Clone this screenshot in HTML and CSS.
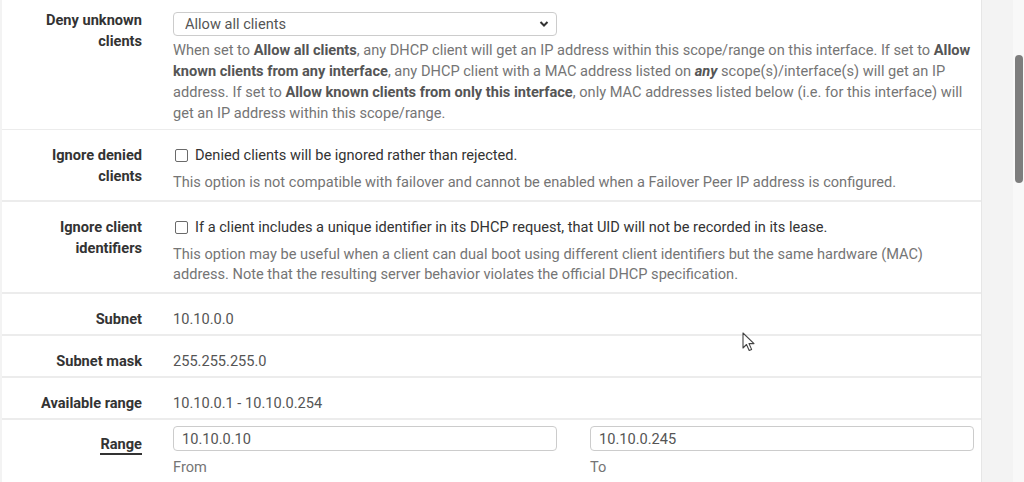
FILE: index.html
```html
<!DOCTYPE html>
<html>
<head>
<meta charset="utf-8">
<link rel="stylesheet" href="styles.css">
</head>
<body>
<div class="page">
  <div class="panel">
    <div class="row row-first">
      <div class="label">Deny unknown clients</div>
      <div class="value">
        <div class="select-wrap">
          <select class="select"><option>Allow all clients</option></select>
          <svg class="chev" width="10" height="8" viewBox="0 0 10 8"><path d="M1.5 2 L5 5.5 L8.5 2" fill="none" stroke="#333" stroke-width="2"/></svg>
        </div>
        <div class="help help-first">When set to <b>Allow all clients</b>, any DHCP client will get an IP address within this scope/range on this interface. If set to <b>Allow</b><br><b>known clients from any interface</b>, any DHCP client with a MAC address listed on <b><i>any</i></b> scope(s)/interface(s) will get an IP<br>address. If set to <b>Allow known clients from only this interface</b>, only MAC addresses listed below (i.e. for this interface) will<br>get an IP address within this scope/range.</div>
      </div>
    </div>
    <div class="row row-check">
      <div class="label">Ignore denied clients</div>
      <div class="value">
        <label class="check"><span class="box"></span>Denied clients will be ignored rather than rejected.</label>
        <div class="help">This option is not compatible with failover and cannot be enabled when a Failover Peer IP address is configured.</div>
      </div>
    </div>
    <div class="row row-check row-check2">
      <div class="label">Ignore client identifiers</div>
      <div class="value">
        <label class="check"><span class="box"></span>If a client includes a unique identifier in its DHCP request, that UID will not be recorded in its lease.</label>
        <div class="help">This option may be useful when a client can dual boot using different client identifiers but the same hardware (MAC) address. Note that the resulting server behavior violates the official DHCP specification.</div>
      </div>
    </div>
    <div class="row row-static">
      <div class="label">Subnet</div>
      <div class="value static">10.10.0.0</div>
    </div>
    <div class="row row-static">
      <div class="label">Subnet mask</div>
      <div class="value static">255.255.255.0</div>
    </div>
    <div class="row row-static">
      <div class="label">Available range</div>
      <div class="value static">10.10.0.1 - 10.10.0.254</div>
    </div>
    <div class="row row-range">
      <div class="label"><span class="req">Range</span></div>
      <div class="value range">
        <div class="field">
          <input class="input" type="text" value="10.10.0.10">
          <div class="sub">From</div>
        </div>
        <div class="field">
          <input class="input" type="text" value="10.10.0.245">
          <div class="sub">To</div>
        </div>
      </div>
    </div>
  </div>
  <div class="gutter"></div>
  <div class="scrollbar"><div class="thumb"></div></div>
</div>
<svg class="cursor" width="14" height="22" viewBox="0 0 14 22"><path d="M1 1 L1 16 L4.5 12.5 L7.2 18.5 L9.6 17.4 L7 11.6 L12 11.6 Z" fill="#fff" stroke="#444" stroke-width="1.1" stroke-linejoin="round"/></svg>
</body>
</html>
```
FILE: styles.css
```css
html, body {
  margin: 0;
  padding: 0;
}
body {
  width: 1024px;
  height: 482px;
  overflow: hidden;
  background: #f3f3f3;
  font-family: Roboto, "Liberation Sans", sans-serif;
  font-size: 14.6px;
  line-height: 21px;
  color: #333;
  position: relative;
}
.page {
  display: flex;
  height: 482px;
}
.panel {
  margin-left: 2px;
  width: 979px;
  background: #fff;
  border-right: 1px solid #e6e6e6;
  flex: none;
}
.gutter {
  flex: 1;
  background: #f3f3f3;
}
.scrollbar {
  width: 11px;
  background: #f8f8f8;
  position: relative;
}
.thumb {
  position: absolute;
  left: 2px;
  top: 55px;
  width: 8px;
  height: 128px;
  border-radius: 4px;
  background: #7d7d7d;
}
.row {
  display: grid;
  grid-template-columns: 171px 1fr;
  border-bottom: 2px solid #ececec;
}
.label {
  font-weight: 700;
  text-align: right;
  padding-right: 31px;
  padding-left: 16px;
  color: #333;
}
.value {
  padding-right: 6px;
}
.row-first {
  padding: 10px 0 5px;
  border-bottom-width: 1px;
}
.select-wrap {
  position: relative;
  width: 384px;
  margin-top: 2px;
}
.select {
  appearance: none;
  -webkit-appearance: none;
  width: 384px;
  height: 24px;
  border: 1px solid #ccc;
  border-radius: 4px;
  background: #fff;
  font-family: Roboto, "Liberation Sans", sans-serif;
  font-size: 14.6px;
  color: #555;
  padding: 0 0 0 11px;
  margin: 0;
  display: block;
}
.chev {
  position: absolute;
  right: 8px;
  top: 8px;
}
.help {
  color: #757575;
  margin-top: 4px;
}
.help-first {
  white-space: nowrap;
}
.help b {
  color: #555;
}
.row-check {
  padding: 15px 0 7px;
}
.check {
  display: flex;
  align-items: center;
  color: #333;
}
.box {
  width: 11px;
  height: 11px;
  border: 1px solid #6a6a6a;
  border-radius: 2px;
  margin: 0 7px 0 2px;
  flex: none;
}
.row-check .help {
  margin-top: 6px;
}
.row-check2 {
  padding-bottom: 8px;
}
.row-check2 .help {
  line-height: 20px;
  margin-top: 6px;
}
.row-static {
  padding: 15px 0 4px;
}
.static {
  color: #555;
}
.row-range {
  padding: 6px 0 4px;
  border-bottom: none;
}
.row-range .label {
  padding-top: 8px;
}
.req {
  border-bottom: 2px solid #333;
}
.range {
  display: grid;
  grid-template-columns: 384px 384px;
  column-gap: 33px;
}
.input {
  display: block;
  box-sizing: border-box;
  width: 384px;
  height: 25px;
  border: 1px solid #ccc;
  border-radius: 4px;
  padding: 0 8px;
  margin: 0;
  font-family: Roboto, "Liberation Sans", sans-serif;
  font-size: 14.6px;
  color: #555;
}
.sub {
  color: #757575;
  margin-top: 6px;
}
.cursor {
  position: absolute;
  left: 742px;
  top: 332px;
}
```
